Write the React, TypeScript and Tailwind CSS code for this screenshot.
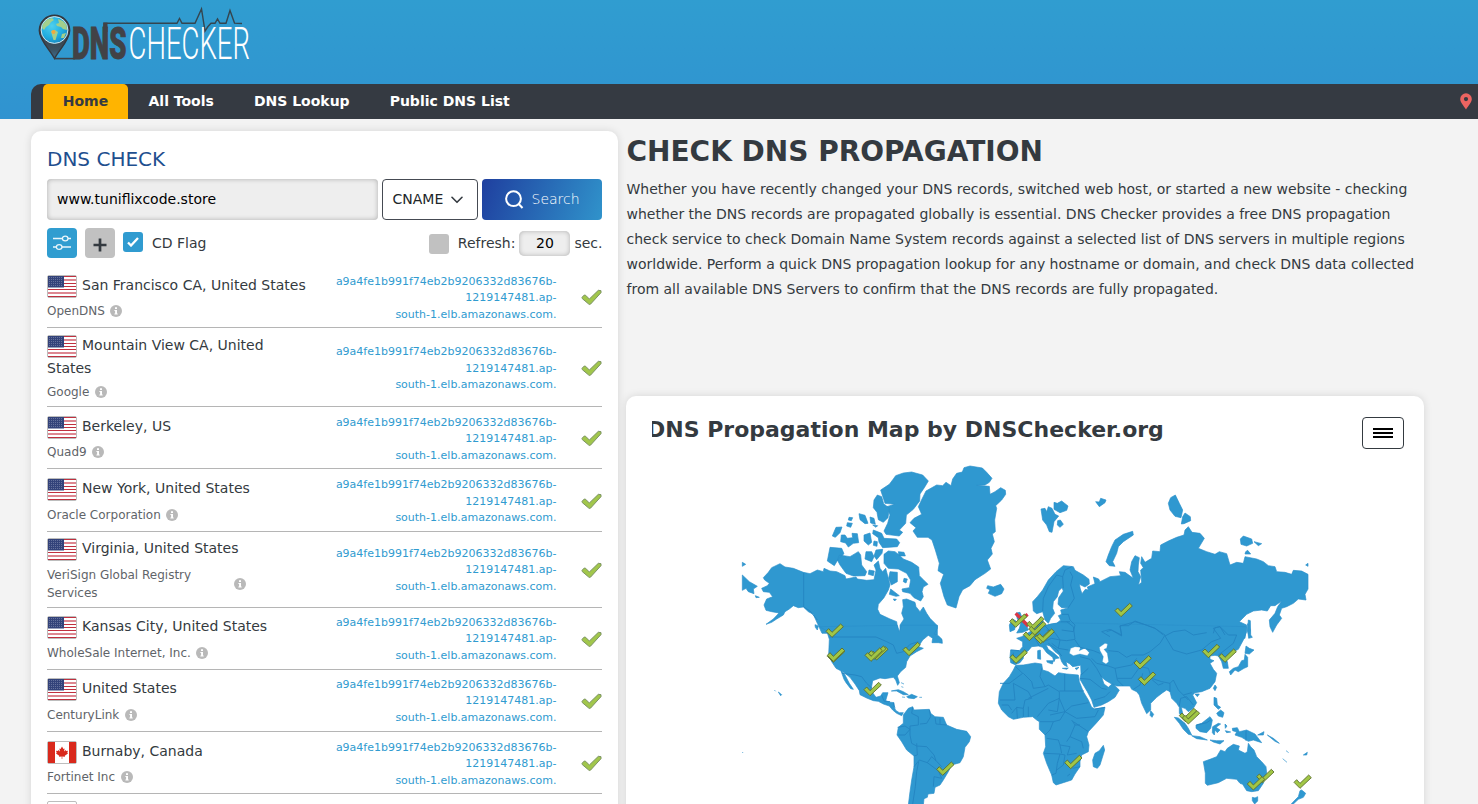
import React from "react";

type Server = {
  name: string[];
  org: string[];
  flag: "us" | "ca";
  height: string;
  pad: string;
  orgGap: string;
  hostGap: string;
  wide?: boolean;
};

const servers: Server[] = [
  { name: ["San Francisco CA, United States"], org: ["OpenDNS"], flag: "us", height: "h-[62px]", pad: "pt-[9px]", orgGap: "mt-[4px]", hostGap: "mt-[1.5px]" },
  { name: ["Mountain View CA, United", "States"], org: ["Google"], flag: "us", height: "h-[79px]", pad: "pt-[7px]", orgGap: "mt-[3px]", hostGap: "mt-[1.5px]" },
  { name: ["Berkeley, US"], org: ["Quad9"], flag: "us", height: "h-[62px]", pad: "pt-[9px]", orgGap: "mt-[4px]", hostGap: "mt-[1.5px]" },
  { name: ["New York, United States"], org: ["Oracle Corporation"], flag: "us", height: "h-[63px]", pad: "pt-[9px]", orgGap: "mt-[5px]", hostGap: "mt-[1.5px]" },
  { name: ["Virginia, United States"], org: ["VeriSign Global Registry", "Services"], flag: "us", height: "h-[76px]", pad: "pt-[6px]", orgGap: "mt-[5px]", hostGap: "mt-[0px]", wide: true },
  { name: ["Kansas City, United States"], org: ["WholeSale Internet, Inc."], flag: "us", height: "h-[62px]", pad: "pt-[8px]", orgGap: "mt-[5px]", hostGap: "mt-[0px]" },
  { name: ["United States"], org: ["CenturyLink"], flag: "us", height: "h-[62px]", pad: "pt-[8px]", orgGap: "mt-[5px]", hostGap: "mt-[0px]" },
  { name: ["Burnaby, Canada"], org: ["Fortinet Inc"], flag: "ca", height: "h-[62px]", pad: "pt-[9px]", orgGap: "mt-[4px]", hostGap: "mt-[1.5px]" },
];

const MARK = "M0,22 L8,14 L18,25 L44,0 L52,8 L18,40 Z";

function CheckMark({ className }: { className?: string }) {
  return (
    <svg viewBox="0 0 63 51" className={className} aria-hidden="true">
      <path d="M3,25 L10,18 Q12,17 14,19 L25,30 L52,4 L60,5 L60,11 L29,45 Q26,48 23,45 L4,29 Z" fill="#a1c64b" stroke="#7d9366" strokeWidth="3" strokeLinejoin="round" />
    </svg>
  );
}

function Flag({ kind }: { kind: "us" | "ca" }) {
  return (
    <svg viewBox="0 0 30 23" className="h-[23px] w-[30px] shrink-0" aria-hidden="true">
      <rect x="0.5" y="0.5" width="29" height="22" rx="1.5" fill="#fff" stroke="#bdbdbd" />
      {kind === "us" ? (
        <g>
          <path d="M1,1.5 H29 M1,8.5 H29 M1,11.5 H29 M1,14.5 H29 M1,21.5 H29" stroke="#c0303f" strokeWidth="1" />
          <path d="M1,5 H29 M1,18 H29" stroke="#dd8791" strokeWidth="2" />
          <rect x="1" y="1" width="16" height="11.5" fill="#34437a" />
          {[2.5, 4.5, 6.5, 8.5, 10.5].map((y) => (
            <path key={y} d={`M2,${y} H16`} stroke="#8e97b8" strokeWidth="0.7" strokeDasharray="0.8 1.2" />
          ))}
        </g>
      ) : (
        <g fill="#d9291c">
          <rect x="1" y="1" width="7" height="21" />
          <rect x="22" y="1" width="7" height="21" />
          <path d="M15,5.5 L16.4,8 L17.6,7.4 L17.1,10.4 L18.8,9 L19.3,10 L21,9.8 L20.3,11.8 L21,12.4 L17.8,14.8 L18,15.8 L15.3,15.4 V18 H14.7 V15.4 L12,15.8 L12.2,14.8 L9,12.4 L9.7,11.8 L9,9.8 L10.7,10 L11.2,9 L12.9,10.4 L12.4,7.4 L13.6,8 Z" />
        </g>
      )}
    </svg>
  );
}

function Info() {
  return (
    <svg viewBox="0 0 12 12" className="-mt-px h-3 w-3 shrink-0" aria-hidden="true">
      <circle cx="6" cy="6" r="6" fill="#b9b9b9" />
      <path d="M5,2.3 H7 V4 H5 Z M4.4,5 H7 V8.6 H7.7 V9.6 H4.4 V8.6 H5.1 V6 H4.4 Z" fill="#fff" />
    </svg>
  );
}

function Logo() {
  return (
    <svg viewBox="36 4 220 60" className="h-[60px] w-[220px] overflow-visible" aria-label="DNS Checker">
      <defs>
        <radialGradient id="globe" cx="0.4" cy="0.35" r="0.7">
          <stop offset="0" stopColor="#4fd0ee" />
          <stop offset="0.6" stopColor="#22aee0" />
          <stop offset="1" stopColor="#1787c0" />
        </radialGradient>
        <linearGradient id="pinFill" x1="0" y1="0" x2="0" y2="1">
          <stop offset="0.45" stopColor="#3c3f46" />
          <stop offset="0.8" stopColor="#3b5262" />
          <stop offset="1" stopColor="#3b6f94" />
        </linearGradient>
      </defs>
      <path d="M54.5,58.5 C50,50 39.3,40 39.3,30.5 A15.2,15.2 0 0 1 69.7,30.5 C69.7,40 59,50 54.5,58.5 Z" fill="url(#pinFill)" stroke="#34383f" strokeWidth="1.4" />
      <circle cx="54.5" cy="30" r="13.4" fill="url(#globe)" stroke="#e4f5fb" strokeWidth="0.9" />
      <g fill="#a3cf8c">
        <path d="M43,24 L47,19.5 L52,18 L54,20 L51,22 L49,25 L46,27 L44,30 L42,28 Z" />
        <path d="M58,19 L63,21 L66.5,25 L67,30 L63,29 L61,27 L57,26 L56,24 L59,23 Z" />
        <path d="M51,31 L55,30 L58,32 L57,35 L55.5,40 L53.5,40 L52,35 Z" />
        <path d="M62,34 L66,33 L64,38 L61,38 Z" />
      </g>
      <circle cx="53.5" cy="32" r="2" fill="#f3a93b" />
      <path d="M54.5,58.6 H75" stroke="#3b4048" strokeWidth="1.6" fill="none" />
      <path d="M104,34 V23.3 H177 L179.5,18.5 L182,23.3 H195 L201.5,9 L205,31 L208,26.5 L211,23.3 H215 L217.5,19 L220,23.3 H226 L230,10.5 L234.5,23.1 L242,23.5" fill="none" stroke="#34454f" strokeWidth="1.4" />
      <path d="M103.3,22.6 H107.5 V32 H103.3 Z" fill="#424246" />
      <text x="72" y="59" textLength="54.5" lengthAdjust="spacingAndGlyphs" fontSize="45" fontWeight="900" fill="#424246" stroke="#424246" strokeWidth="0.9" className="font-['Roboto','Liberation_Sans',sans-serif]">DNS</text>
      <text x="128.5" y="59.3" textLength="121.5" lengthAdjust="spacingAndGlyphs" fontSize="45" fontWeight="300" fill="#fff" className="font-['Roboto','Liberation_Sans',sans-serif]">CHECKER</text>
    </svg>
  );
}

const checks: [number, number][] = [
  [288, 507], [292, 582], [292, 579], [422, 575], [416, 573], [405, 579], [519, 562], [402, 682], [620, 921],
  [1155, 445], [839, 477], [890, 485], [880, 517], [896, 500], [914, 526], [921, 522],
  [840, 585], [1417, 568], [1467, 582], [1212, 602], [1225, 651],
  [1348, 760], [1357, 767], [1580, 943], [1004, 901], [1552, 965], [1692, 960],
];

function WorldMap() {
  return (
    <svg viewBox="0 0 1770 1047" className="h-[349px] w-[590px]" aria-label="World map">
      <g fill="#2f98d0" stroke="#2a8fca" strokeWidth="2" strokeLinejoin="round">
        {/* Arctic islands, Greenland and the northern part of America */}
        <path d="M663,92 L668,72 L680,55 L697,51 L702,38 L720,33 L757,39 L770,52 L786,70 L778,82 L765,90 L740,91 L778,94 L780,118 L795,110 L812,98 L826,106 L827,118 L815,135 L797,152 L800,160 L794,195 L796,230 L787,237 L793,260 L783,280 L787,297 L772,315 L782,342 L765,355 L735,374 L720,392 L698,404 L687,425 L678,459 L652,450 L642,425 L631,385 L641,358 L624,347 L628,325 L616,285 L606,255 L594,247 L562,247 L549,228 L558,218 L540,203 L552,190 L575,178 L565,155 L576,132 L588,108 L620,90 L638,92 L648,82 Z" />
        <path d="M497,62 L520,54 L545,51 L578,60 L595,78 L583,98 L570,117 L569,138 L550,163 L529,180 L527,205 L508,225 L518,232 L508,243 L468,238 L462,228 L473,205 L480,180 L470,155 L494,148 L465,145 L452,105 L478,88 L490,72 Z" />
        <path d="M442,120 L455,125 L461,146 L478,160 L474,188 L460,202 L445,194 L441,172 L430,158 L432,135 Z" />
        <path d="M387,176 L405,181 L414,205 L405,206 L390,194 Z M420,186 L432,190 L436,208 L422,204 Z M428,210 L443,212 L438,217 Z M357,187 L368,188 L364,197 L355,195 Z M352,203 L367,205 L362,217 L350,213 Z M430,225 L455,235 L462,250 L500,252 L509,263 L502,275 L458,278 L447,262 L445,248 L428,236 Z M318,217 L336,216 L330,233 L316,247 L307,243 Z M334,240 L345,240 L352,250 L368,248 L366,235 L382,236 L386,263 L370,265 L355,276 L347,264 L332,260 Z M402,240 L420,234 L425,262 L415,270 L402,258 Z M432,258 L442,260 L441,274 L430,271 Z" />
        <path d="M300,277 L335,280 L342,296 L325,312 L313,332 L292,318 Z M328,300 L360,305 L385,290 L392,300 L395,330 L410,350 L405,362 L370,363 L348,355 L330,330 L322,315 Z M408,290 L425,290 L432,305 L425,320 L405,312 Z M438,285 L458,283 L456,295 L440,314 L432,303 Z M417,345 L433,348 L430,362 L415,358 Z" />
        <path d="M462,298 L475,288 L495,290 L510,302 L520,312 L545,322 L566,336 L568,362 L580,374 L594,388 L580,396 L576,410 L580,425 L572,438 L552,428 L540,415 L518,410 L516,402 L538,398 L542,375 L530,355 L505,342 L475,340 L462,325 Z M505,290 L522,292 L526,303 L507,302 Z M480,350 L502,352 L502,380 L484,390 L476,370 Z M522,370 L532,372 L528,384 L520,380 Z M482,402 L508,422 L498,424 L478,418 Z M490,432 L499,433 L494,438 Z" />
        <path d="M37,322 L47,328 L37,334 Z M37,360 L58,380 L82,394 L70,402 L72,416 L55,410 L48,400 L37,406 Z M76,422 L88,427 L78,428 Z" />
        <path d="M150,326 L165,336 L190,340 L220,352 L240,356 L262,345 L280,350 L282,340 L300,348 L320,350 L345,362 L348,372 L378,366 L382,372 L410,376 L432,374 L438,345 L432,330 L445,318 L450,340 L458,350 L467,340 L475,370 L480,390 L475,405 L462,428 L445,448 L443,463 L450,478 L480,492 L500,500 L505,535 L276,535 L262,505 L250,478 L235,470 L220,456 L205,458 L190,452 L178,462 L165,470 L160,480 L140,492 L125,502 L108,508 L130,492 L147,474 L125,470 L108,466 L102,450 L110,432 L128,425 L118,412 L100,410 L95,400 L112,392 L118,385 L104,375 L100,368 L115,352 L125,338 Z" />
        <path d="M518,434 L530,432 L555,442 L558,455 L570,470 L580,456 L590,475 L600,490 L622,512 L622,540 L510,540 L510,510 L522,492 L515,475 L520,455 Z" />
        <path d="M773,392 L790,396 L812,388 L822,402 L815,416 L795,424 L775,415 L780,404 L770,400 Z" />
        {/* Southern part of North America, Caribbean, South America */}
        <g transform="translate(0 495)">
          <path d="M268,20 L290,32 L298,58 L296,105 L305,125 L318,145 L332,152 L345,160 L360,172 L375,192 L388,212 L390,224 L410,234 L430,242 L445,244 L460,252 L478,258 L488,270 L500,280 L515,287 L520,278 L508,278 L498,272 L492,262 L492,248 L476,246 L467,242 L474,218 L458,218 L452,228 L438,232 L428,218 L424,205 L428,182 L450,174 L465,176 L490,172 L497,180 L503,196 L508,188 L502,168 L512,155 L527,142 L530,125 L540,108 L560,95 L580,85 L565,80 L578,60 L595,46 L608,55 L606,68 L625,68 L637,70 L636,58 L626,48 L612,42 L622,25 L622,16 L515,16 L508,35 L502,16 Z" />
          <path d="M333,153 L345,165 L358,190 L370,208 L362,206 L348,188 L342,178 Z M255,14 L265,18 L262,30 L256,22 Z M133,210 L137,214 M145,216 L155,224 L152,227 Z M513,188 L522,192 M514,200 L520,202 M484,213 L505,209 L520,215 L535,224 L520,224 L500,213 Z M530,230 L545,223 L562,230 L552,236 L535,234 Z M516,231 L525,232 M568,232 L576,232 M37,396 L39,399" />
          <path d="M520,285 L535,265 L548,260 L552,270 L598,268 L602,280 L615,290 L640,292 L650,315 L680,328 L710,334 L722,350 L718,365 L705,382 L700,410 L690,428 L665,435 L655,455 L640,480 L630,495 L615,502 L612,520 L594,522 L592,532 L582,536 L580,555 L535,555 L540,515 L545,480 L552,440 L552,408 L530,390 L515,365 L501,345 L505,322 L520,310 Z" />
        </g>
        {/* Northern Eurasia */}
        <g transform="translate(750 0)">
          <path d="M183,162 L195,160 L200,170 L205,155 L216,160 L225,178 L236,183 L222,200 L216,232 L208,230 L200,210 L188,195 Z M222,142 L232,145 L245,138 L264,153 L260,166 L240,173 L222,163 Z M233,197 L241,195 L250,208 L240,217 L232,210 Z M347,140 L358,141 L362,130 L378,135 L375,143 L358,155 Z" />
          <path d="M458,229 L460,240 L430,260 L415,275 L410,295 L398,320 L405,334 L388,332 L378,320 L385,300 L395,275 L405,255 L430,238 Z M586,120 L598,145 L608,165 L603,188 L585,184 L570,165 L565,145 L572,128 Z M615,174 L631,185 L632,197 L612,206 L604,207 L608,185 Z M781,252 L790,243 L815,252 L818,265 L800,273 L783,268 Z M822,260 L845,266 L835,272 Z M797,290 L803,286 L812,297 L795,297 Z M977,330 L984,325 V334 Z" />
          <path d="M158,440 L172,425 L188,405 L205,375 L228,350 L250,332 L280,335 L285,346 L310,360 L327,373 L328,387 L315,396 L298,388 L301,402 L306,416 L316,403 L325,405 L322,396 L345,386 L340,366 L356,372 L360,380 L390,365 L422,362 L418,350 L435,352 L460,370 L450,345 L455,320 L465,302 L478,308 L475,330 L474,350 L482,365 L475,390 L485,382 L482,345 L490,338 L482,325 L485,305 L495,322 L515,310 L518,288 L540,290 L542,270 L565,258 L590,247 L612,240 L615,225 L625,215 L636,232 L660,235 L673,250 L655,280 L680,290 L705,298 L718,290 L740,296 L750,330 L770,322 L790,325 L795,305 L830,312 L850,320 L865,332 L885,335 L890,350 L915,352 L935,358 L940,346 L965,348 L984,358 V402 L975,418 L978,435 L955,432 L940,445 L920,455 L905,460 L898,480 L905,490 L890,510 L878,532 L870,515 L868,495 L885,475 L893,455 L905,438 L885,452 L872,452 L862,468 L845,465 L820,468 L800,478 L778,500 L800,510 L795,550 L130,550 L150,535 L170,520 L172,500 L182,485 L190,500 L186,512 L202,510 L230,505 L242,495 L235,482 L245,478 L242,465 L266,458 L245,458 L234,448 L236,428 L250,408 L246,398 L236,408 L232,425 L220,440 L218,460 L224,475 L212,490 L205,505 L195,495 L188,470 L170,476 L160,468 Z" />
          <path d="M108,474 L120,472 L125,485 L132,495 L140,512 L145,525 L128,532 L110,534 L118,520 L122,505 L112,492 Z M88,510 L98,492 L108,498 L104,524 L90,530 Z M803,506 L811,525 L808,545 L803,530 Z" />
        </g>
        {/* Southern Eurasia, Africa and Oceania */}
        <g transform="translate(750 495)">
          <path d="M240,8 L212,12 L195,18 L172,20 L150,35 L125,50 L110,55 L128,65 L128,80 L118,92 L92,90 L90,110 L92,128 L105,134 L120,128 L130,115 L130,102 L145,92 L155,80 L175,78 L188,82 L200,98 L218,112 L222,125 L226,116 L238,114 L220,98 L205,88 L198,74 L210,78 L225,95 L238,105 L245,125 L252,135 L262,140 L258,125 L270,132 L278,140 L302,136 L303,160 L300,178 L310,195 L322,215 L335,240 L342,262 L365,255 L385,245 L405,232 L418,210 L405,198 L398,190 L385,202 L372,192 L365,172 L378,182 L395,192 L410,198 L450,198 L455,208 L470,215 L478,225 L485,250 L500,281 L512,270 L512,250 L530,232 L548,218 L560,210 L570,215 L575,235 L590,250 L598,262 L598,280 L608,296 L618,300 L608,280 L604,262 L615,265 L625,275 L640,265 L650,248 L638,225 L645,218 L665,215 L690,205 L705,185 L710,160 L700,148 L690,130 L702,122 L690,118 L690,108 L705,106 L715,108 L725,125 L730,145 L745,145 L742,125 L735,115 L750,100 L775,88 L790,60 L800,35 L800,20 Z" />
          <path d="M107,136 L130,135 L165,129 L185,132 L188,150 L205,155 L225,168 L235,158 L260,162 L295,165 L298,185 L310,215 L325,240 L335,262 L345,267 L375,262 L370,285 L350,308 L325,335 L320,350 L327,375 L325,395 L305,405 L300,425 L300,440 L285,462 L275,480 L250,488 L228,495 L220,488 L215,465 L200,430 L190,400 L197,380 L195,345 L178,328 L178,305 L170,300 L158,290 L130,292 L100,298 L85,290 L65,270 L55,250 L58,215 L70,190 L88,170 L100,150 Z" />
          <path d="M370,376 L374,390 L360,435 L352,445 L340,440 L338,420 L345,400 L358,392 Z M512,272 L521,283 L516,292 L510,286 Z M805,0 L811,2 L812,45 L817,52 L806,55 L803,30 Z M798,78 L808,85 L822,90 L808,102 L795,100 Z M795,103 L803,112 L803,140 L792,145 L775,155 L765,150 L752,165 L748,155 L760,145 L775,140 L785,122 L793,120 Z M705,195 L710,202 L705,212 L700,205 Z M645,222 L658,222 L652,230 Z" />
          <path d="M583,292 L595,294 L615,310 L625,325 L635,345 L625,343 L610,328 L598,310 Z M635,347 L660,350 L682,360 L650,356 Z M648,315 L665,310 L690,290 L697,300 L692,325 L680,338 L660,335 L648,325 Z M698,320 L715,310 L722,312 L708,322 L720,330 L712,338 L705,330 L703,345 L697,338 Z M690,360 L710,362 L732,362 L720,372 L700,366 Z M702,232 L710,235 L712,255 L722,262 L715,268 L702,255 Z M710,280 L722,270 L732,278 L728,292 L715,288 Z M735,312 L741,318 L736,325 Z M736,332 L752,336 L740,338 Z M757,325 L772,323 L778,335 L800,330 L825,342 L845,368 L820,360 L805,364 L785,352 L765,345 L770,336 L758,332 Z M833,345 L852,335 L850,345 Z M862,345 L880,355 L898,370 L885,364 Z M918,392 L926,398 M908,416 L921,427 M970,405 L982,397 L980,405 Z" />
          <path d="M670,425 L676,460 L676,490 L682,496 L715,488 L740,475 L770,478 L780,490 L788,493 L800,512 L815,515 L835,512 L850,490 L860,460 L858,440 L845,425 L830,410 L822,390 L812,380 L805,370 L802,395 L795,400 L775,390 L778,378 L760,373 L742,385 L735,395 L722,390 L710,410 L690,418 Z M817,532 L825,534 L833,530 L833,543 L824,552 L817,542 Z M960,512 L965,510 L977,520 L970,532 L955,538 L940,552 L930,556 L945,540 L955,530 Z" />
          <path d="M173,92 L181,90 L182,118 L173,116 Z M200,122 L220,122 L217,132 L202,127 Z M247,145 L265,144 L260,148 Z M285,145 L297,142 L290,149 Z" />
        </g>
      </g>
      {/* Inland seas */}
      <g transform="translate(750 495)" fill="#fff" stroke="#2a8fca" strokeWidth="1">
        <path d="M268,100 L272,85 L285,80 L302,82 L298,92 L315,84 L328,98 L322,107 L300,102 L280,107 Z" />
        <path d="M358,82 L375,70 L383,72 L380,85 L372,88 L382,100 L386,125 L378,132 L367,125 L370,110 L360,92 Z" />
      </g>
      {/* Borders */}
      <g fill="none" stroke="#2383c0" strokeWidth="2.6" strokeLinejoin="round">
        <path d="M221,353 V456 L240,468 L262,495" />
        <path d="M298,546 H438 L470,560 L490,570 L500,595 L520,590 L540,568 L565,560 M336,655 L375,660 L395,665 L410,685 L426,700 M455,720 L462,738 L480,740 M490,743 L495,760" />
        <g transform="translate(0 495)">
          <path d="M548,262 L545,280 L565,290 L565,315 L540,318 L540,345 L545,370 L560,378 L590,380 L612,405 L618,422 L605,410 L592,428 L568,420 L552,440 M560,370 L562,405 L552,408 M598,270 L602,290 L590,310 L570,312 M615,292 L618,312 L650,315 M630,295 V312 M503,322 L525,318 L540,328 L525,345 L505,345 M566,425 L560,455 L556,500 L548,552 M592,428 L615,445 L625,452 L635,475 L612,470 L610,500 M618,422 L635,440" />
        </g>
        <g transform="translate(750 0)">
          <path d="M188,468 L190,430 L205,395 L230,360 L248,365 L250,400 M248,365 L255,345 L275,335 M270,350 L278,365 L272,390 L283,430 L265,458 M245,478 H265 L270,495 L285,510 L280,530 L245,525 M242,500 H270 M380,530 L395,525 L425,540 L420,512 L445,512 L465,498 L498,510 L525,520 L550,540 M700,535 L705,518 L720,515 L735,540" />
        </g>
        <g transform="translate(750 495)">
          <path d="M390,50 L365,35 L390,28 L425,48 L420,18 L465,5 L498,15 L525,25 L555,45 L540,70 L510,95 L490,105 L455,105 L440,112 L415,95 L385,92 M555,48 L580,90 L620,102 L665,90 L695,65 L722,55 L700,25 L720,20 L745,45 L770,45 L760,70 L735,90 L715,105 M555,48 L580,35 L615,30 L640,45 L680,38 M300,82 L340,92 L360,100 M300,110 L330,118 L350,145 L365,172 M335,115 L350,130 L385,138 L405,145 L455,135 L470,115 M405,145 L412,180 L430,198 M412,175 L455,175 L480,140 L505,145 L515,175 L545,185 L570,190 L570,215 M460,208 L480,195 L488,160 M515,178 L535,195 L550,190 M570,190 L580,180 L595,210 L610,225 L635,218 M598,258 L602,235 L620,230 L640,255 M610,225 L625,240 M303,165 L325,145 M300,175 L330,178 L365,205 L380,208 M342,240 L375,230 L390,215" />
          <path d="M200,30 L225,38 L240,60 L260,62 L285,58 L280,20 L260,5 M165,55 L190,65 L215,55 L240,60 M172,20 L165,55 L178,78 M240,60 L235,85 L265,90 M205,70 L230,88 L245,108 M285,60 L300,82 M92,90 L118,92 M100,98 V130 M195,18 L215,38 L195,55 M235,85 L215,70" />
          <path d="M107,140 L128,160 L88,190 H60 M100,190 L105,240 H60 M100,190 L145,215 L155,235 L135,240 L130,265 L110,262 L95,280 M130,160 L155,185 L160,205 L195,200 M185,145 L180,170 L195,200 L205,195 L238,215 V235 M254,162 V213 H312 M238,213 L254,213 M145,235 L205,205 M172,290 L205,250 L238,235 L232,275 L205,270 M210,285 L255,275 L275,258 L325,248 M238,235 L255,275 L290,295 L345,290 L355,270 M180,305 H220 L210,330 L195,345 M275,300 L285,315 L270,350 L305,365 L310,385 M200,355 L235,360 L240,375 L270,380 L262,405 L290,400 M192,400 L240,402 L232,430 L228,460 L215,465 M240,402 L255,405 L250,435 L230,450 M270,350 L260,365 M240,375 L245,400 M280,305 L325,335 M285,315 H300 M255,275 L240,300 L220,305 M65,255 H85 L95,270 M110,262 L112,295 M130,265 V290 M145,260 V290 M262,468 L270,462 M278,445 L300,440 M375,262 L345,267 M798,332 V362 M650,315 L680,308 L692,300" />
        </g>
      </g>
      {/* Markers */}
      <path d="M857,475 L895,513 M893,478 L880,488" stroke="#dc3545" strokeWidth="10" fill="none" />
      {checks.map(([x, y], i) => (
        <path key={i} d={MARK} transform={`translate(${x} ${y})`} fill="#a1c645" stroke="#5a6c2c" strokeWidth="2.6" strokeLinejoin="round" />
      ))}
    </svg>
  );
}

function ServerRow({ s }: { s: Server }) {
  return (
    <div className={`flex border-b border-[#b5b5b5] ${s.height}`}>
      <div className={`w-[270px] shrink-0 ${s.pad}`}>
        <div className="flex h-[23px] items-center gap-[5px] whitespace-nowrap text-[14px] text-[#343a40]">
          <Flag kind={s.flag} />
          <span className="relative -top-px">{s.name[0]}</span>
        </div>
        {s.name[1] && <div className="-mt-px text-[14px] leading-[23px] text-[#343a40]">{s.name[1]}</div>}
        <div className={`flex items-center gap-[5.5px] text-[12px] leading-[18px] text-[#5f6469] ${s.orgGap}`}>
          <div className={s.wide ? "w-[181px]" : ""}>
            {s.org.map((line) => (
              <div key={line}>{line}</div>
            ))}
          </div>
          <Info />
        </div>
      </div>
      <div className="flex grow items-center justify-end pt-[2px]">
        <div className={`text-right text-[11px] leading-[16.5px] text-[#309bd0] ${s.hostGap}`}>
          a9a4fe1b991f74eb2b9206332d83676b-
          <br />
          1219147481.ap-
          <br />
          south-1.elb.amazonaws.com.
        </div>
        <CheckMark className="ml-[24.5px] h-[17px] w-[21px]" />
      </div>
    </div>
  );
}

export default function App() {
  return (
    <div className="h-[804px] w-[1478px] overflow-hidden bg-[#f3f3f3] font-['DejaVu_Sans',sans-serif]">
      <header className="flex h-[119px] flex-col bg-linear-to-b from-[#309dd0] to-[#3093d0]">
        <div className="h-[84px] pt-[4px] pl-[36px]">
          <Logo />
        </div>
        <nav className="ml-[31px] flex h-[35px] items-stretch rounded-tl-[10px] bg-[#353a42] pl-[12px] text-[14px] leading-[35px] font-bold text-white">
          <a className="w-[85px] rounded-t-[5px] bg-[#ffb400] text-center text-[#353a42]">Home</a>
          <a className="ml-[20.5px]">All Tools</a>
          <a className="ml-[40px]">DNS Lookup</a>
          <a className="ml-[40px]">Public DNS List</a>
          <svg viewBox="0 0 12 17" className="mt-[9px] mr-[6px] ml-auto h-[17px] w-[12px]" aria-hidden="true">
            <path fillRule="evenodd" d="M6,0.3 A5.8,5.8 0 0 1 11.8,6 C11.8,9.5 8.5,12.5 6,16.5 C3.5,12.5 0.2,9.5 0.2,6 A5.8,5.8 0 0 1 6,0.3 Z M6,4 A2.1,2.1 0 1 0 6,8.2 A2.1,2.1 0 1 0 6,4 Z" fill="#ec6461" />
          </svg>
        </nav>
      </header>

      <main className="flex pt-[12px] pl-[31px]">
        <section className="h-[700px] w-[587px] shrink-0 rounded-[10px] bg-white px-[16px] pt-[14px] shadow-[0_0_8px_rgba(0,0,0,0.12)]">
          <h2 className="text-[20px] leading-[28px] text-[#1f4f8f]">DNS CHECK</h2>
          <div className="mt-[6px] flex h-[41px] gap-[4px]">
            <div className="w-[331px] rounded-[4px] bg-[#eee] pl-[10px] text-[14px] leading-[40px] text-black shadow-[inset_0_0_5px_rgba(0,0,0,0.28)]">www.tuniflixcode.store</div>
            <div className="flex w-[96px] items-center rounded-[4px] border border-[#454a52] bg-white pl-[9.5px] text-[14px] text-[#212529]">
              <span>CNAME</span>
              <svg viewBox="0 0 12 8" className="ml-[8px] h-[8px] w-[12px]" aria-hidden="true">
                <path d="M1,1.3 L6,6.3 L11,1.3" fill="none" stroke="#343a40" strokeWidth="1.6" strokeLinecap="round" strokeLinejoin="round" />
              </svg>
            </div>
            <div className="flex w-[120px] items-center rounded-[4px] bg-linear-[110deg] from-[#1f3f9f] to-[#3093cb] pl-[23px] text-[14px] font-extralight text-white">
              <svg viewBox="0 0 19 19" className="h-[19px] w-[19px]" aria-hidden="true">
                <circle cx="8.5" cy="8.7" r="7.4" fill="none" stroke="#fff" strokeWidth="2" />
                <path d="M13.5,13.7 L17.5,18" stroke="#fff" strokeWidth="2" />
              </svg>
              <span className="ml-[7.5px]">Search</span>
            </div>
          </div>
          <div className="mt-[8px] flex h-[30px] items-center text-[14px] text-[#343a40]">
            <div className="flex h-[30px] w-[30px] items-center justify-center rounded-[4px] bg-[#309dd0]">
              <svg viewBox="0 0 20 16" className="h-[16px] w-[20px]" fill="none" stroke="#e9f6fb" strokeWidth="1.3" aria-hidden="true">
                <path d="M1,3.5 H10.5 M16,3.5 H19 M1,12 H4.5 M10,12 H19" />
                <ellipse cx="13.2" cy="3.5" rx="2.8" ry="2.4" />
                <ellipse cx="7.2" cy="12" rx="2.8" ry="2.4" />
              </svg>
            </div>
            <div className="ml-[8px] flex h-[30px] w-[30px] items-center justify-center rounded-[4px] bg-[#c1c1c1]">
              <svg viewBox="0 0 14 14" className="mt-[3px] h-[14px] w-[14px]" aria-hidden="true">
                <path d="M7,0.5 V13.5 M0.5,7 H13.5" stroke="#343a40" strokeWidth="2.7" />
              </svg>
            </div>
            <div className="mb-[3px] ml-[8px] flex h-[20px] w-[20px] items-center justify-center rounded-[3px] bg-[#309bd0]">
              <svg viewBox="0 0 12 10" className="h-[10px] w-[12px]" aria-hidden="true">
                <path d="M1,5.5 L4,8.5 L11,1" fill="none" stroke="#fff" strokeWidth="2.3" />
              </svg>
            </div>
            <span className="ml-[9px]">CD Flag</span>
            <div className="mt-[2px] ml-auto h-[20px] w-[20px] rounded-[3px] bg-[#c1c1c1]" />
            <span className="ml-[9px]">Refresh:</span>
            <div className="ml-[4px] h-[25px] w-[51px] rounded-[5px] bg-[#eee] text-center leading-[25px] text-black shadow-[inset_0_0_5px_rgba(0,0,0,0.25)]">20</div>
            <span className="-mr-[0.5px] ml-[4px]">sec.</span>
          </div>
          <div className="mt-[8px]">
            {servers.map((s, i) => (
              <ServerRow key={i} s={s} />
            ))}
            <div className="mt-[7px] h-[22px] w-[30px] rounded-[2px] border border-[#bdbdbd] bg-white" />
          </div>
        </section>

        <section className="ml-[8px] w-[798px] shrink-0">
          <h1 className="h-[46px] pl-[0.5px] text-[28px] leading-[41px] font-bold whitespace-nowrap text-[#343a40]">CHECK DNS PROPAGATION</h1>
          <p className="pl-[0.5px] text-[14px] leading-[25px] whitespace-nowrap text-[#343a40]">
            Whether you have recently changed your DNS records, switched web host, or started a new website - checking
            <br />
            whether the DNS records are propagated globally is essential. DNS Checker provides a free DNS propagation
            <br />
            check service to check Domain Name System records against a selected list of DNS servers in multiple regions
            <br />
            worldwide. Perform a quick DNS propagation lookup for any hostname or domain, and check DNS data collected
            <br />
            from all available DNS Servers to confirm that the DNS records are fully propagated.
          </p>
          <div className="mt-[94px] h-[430px] rounded-[10px] bg-white shadow-[0_0_8px_rgba(0,0,0,0.12)]">
            <div className="flex h-[59px] justify-between pt-[21px] pr-[20px] pl-[26px]">
              <div className="h-[32px] overflow-hidden">
                <h2 className="-ml-[5px] text-[22px] leading-[26px] font-bold whitespace-nowrap text-[#343a40]">DNS Propagation Map by DNSChecker.org</h2>
              </div>
              <div className="flex h-[32px] w-[42px] flex-col items-center justify-center gap-[2px] rounded-[4px] border border-[#343a40]">
                <span className="h-[2px] w-[20px] bg-black" />
                <span className="h-[2px] w-[20px] bg-black" />
                <span className="h-[2px] w-[20px] bg-black" />
              </div>
            </div>
            <div className="pl-[104px]">
              <WorldMap />
            </div>
          </div>
        </section>
      </main>
    </div>
  );
}
